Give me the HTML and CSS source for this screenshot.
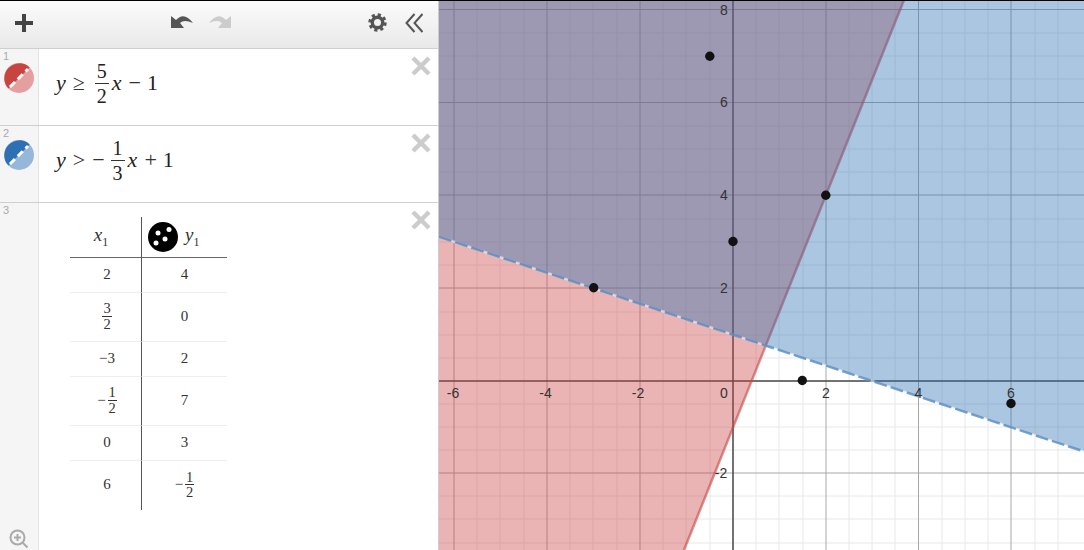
FILE: index.html
```html
<!DOCTYPE html>
<html lang="en">
<head>
<meta charset="utf-8">
<title>Graph</title>
<link rel="stylesheet" href="styles.css">
</head>
<body>
<div class="app">
  <div class="panel">
    <div class="toolbar">
      <svg class="icon plus" width="18" height="18" viewBox="0 0 18 18"><path d="M7 0h4v7h7v4h-7v7H7v-7H0V7h7z"/></svg>
      <svg class="icon undo" width="22" height="14" viewBox="0 0 22 14"><path d="M0 2 L5 6 Q13 -3 22 9 Q13 5 9 9 L13 14 L0 14 Z"/></svg>
      <svg class="icon redo" width="22" height="14" viewBox="0 0 22 14"><path d="M22 2 L17 6 Q9 -3 0 9 Q9 5 13 9 L9 14 L22 14 Z"/></svg>
      <svg class="icon gear" width="19" height="19" viewBox="0 0 20 20"><circle cx="10" cy="10" r="5.500" fill="none" stroke="#555" stroke-width="3.600"/><circle cx="10" cy="10" r="8" fill="none" stroke="#555" stroke-width="3.400" stroke-dasharray="3.280 3"/></svg>
      <svg class="icon chev" width="18" height="20" viewBox="0 0 18 20"><path d="M9.500 1 L1.500 10 L9.500 19 M17.500 1 L9.500 10 L17.500 19" fill="none" stroke="#555" stroke-width="2"/></svg>
    </div>

    <div class="row expr">
      <div class="gutter">
        <span class="num">1</span>
        <svg class="swatch" width="30" height="30" viewBox="0 0 30 30">
          <circle cx="15" cy="15" r="15" fill="#e3a09e"/>
          <path d="M4.400 25.600 A15 15 0 0 1 25.600 4.400 Z" fill="#c74440"/>
          <path d="M6 24 L24 6" stroke="#fff" stroke-width="3" stroke-dasharray="7 4"/>
        </svg>
      </div>
      <div class="math">
        <i>y</i><span class="op">≥</span>
        <span class="frac"><span class="top">5</span><span class="bot">2</span></span>
        <i>x</i><span class="op">−</span><span>1</span>
      </div>
      <svg class="close" width="20" height="20" viewBox="0 0 20 20"><path d="M2 2 L18 18 M18 2 L2 18" stroke="#ccc" stroke-width="4.500"/></svg>
    </div>

    <div class="row expr">
      <div class="gutter">
        <span class="num">2</span>
        <svg class="swatch" width="30" height="30" viewBox="0 0 30 30">
          <circle cx="15" cy="15" r="15" fill="#96b7d9"/>
          <path d="M4.400 25.600 A15 15 0 0 1 25.600 4.400 Z" fill="#2d70b3"/>
          <path d="M6 24 L24 6" stroke="#fff" stroke-width="3" stroke-dasharray="7 4"/>
        </svg>
      </div>
      <div class="math">
        <i>y</i><span class="op">&gt;</span><span class="neg">−</span>
        <span class="frac"><span class="top">1</span><span class="bot">3</span></span>
        <i>x</i><span class="op">+</span><span>1</span>
      </div>
      <svg class="close" width="20" height="20" viewBox="0 0 20 20"><path d="M2 2 L18 18 M18 2 L2 18" stroke="#ccc" stroke-width="4.500"/></svg>
    </div>

    <div class="row last">
      <div class="gutter">
        <span class="num">3</span>
        <svg class="zoomer" width="20" height="20" viewBox="0 0 20 20"><circle cx="8.500" cy="8.500" r="7" fill="none" stroke="#aaa" stroke-width="2"/><path d="M5 8.500h7M8.500 5v7M13.500 13.500 L18.500 18.500" stroke="#aaa" stroke-width="2"/></svg>
      </div>
      <div class="table">
        <div class="cell left head"><span class="hx"><i>x</i><sub>1</sub></span></div>
        <div class="cell head right-head">
          <svg width="30" height="30" viewBox="0 0 30 30"><circle cx="15" cy="15" r="15" fill="#000"/><circle cx="10" cy="11" r="2.500" fill="#fff"/><circle cx="21" cy="7.500" r="2.500" fill="#fff"/><circle cx="17" cy="17" r="2.500" fill="#fff"/><circle cx="8" cy="21" r="2.500" fill="#fff"/></svg>
          <span class="hy"><i>y</i><sub>1</sub></span>
        </div>

        <div class="cell left h35">2</div><div class="cell h35">4</div>
        <div class="cell left h49"><span class="frac small"><span class="top">3</span><span>2</span></span></div><div class="cell h49">0</div>
        <div class="cell left h35">−3</div><div class="cell h35">2</div>
        <div class="cell left h49"><span class="minus">−</span><span class="frac small"><span class="top">1</span><span>2</span></span></div><div class="cell h49">7</div>
        <div class="cell left h35">0</div><div class="cell h35">3</div>
        <div class="cell left h49 end">6</div><div class="cell h49 end"><span class="minus">−</span><span class="frac small"><span class="top">1</span><span>2</span></span></div>
      </div>
      <svg class="close" width="20" height="20" viewBox="0 0 20 20"><path d="M2 2 L18 18 M18 2 L2 18" stroke="#ccc" stroke-width="4.500"/></svg>
    </div>
  </div>

  <svg class="graph" width="645" height="549" viewBox="439 1 645 549">
    <rect x="439" y="0" width="645" height="550" fill="#fff"/>
    <g stroke="#e8e8e8" stroke-width="1">
      <path d="M477 0V550M500 0V550M524 0V550M570 0V550M593 0V550M617 0V550M663 0V550M686 0V550M710 0V550M756 0V550M779 0V550M803 0V550M849 0V550M872 0V550M895 0V550M942 0V550M965 0V550M988 0V550M1035 0V550M1058 0V550"/>
      <path d="M439 33H1084M439 56H1084M439 79H1084M439 126H1084M439 149H1084M439 172H1084M439 219H1084M439 242H1084M439 265H1084M439 312H1084M439 335H1084M439 358H1084M439 404H1084M439 427H1084M439 450H1084M439 496H1084M439 519H1084M439 543H1084"/>
    </g>
    <g stroke="#a8a8a8" stroke-width="1">
      <path d="M454 0V550M547 0V550M640 0V550M826 0V550M918.500 0V550M1011 0V550"/>
      <path d="M439 9.500H1084M439 102.500H1084M439 195H1084M439 288H1084M439 473H1084"/>
    </g>
    <path d="M439 381H1084M733 0V550" stroke="#444" stroke-width="1.500"/>

    <polygon points="439,0 904,0 684,550 439,550" fill="#c74440" fill-opacity=".4"/>
    <line x1="904" y1="0" x2="684" y2="550" stroke="#c74440" stroke-width="2.500" stroke-opacity=".6"/>
    <polygon points="439,0 1084,0 1084,451.500 439,236.800" fill="#2d70b3" fill-opacity=".4"/>
    <line x1="439" y1="236.800" x2="1084" y2="451.500" stroke="#fff" stroke-width="2.500" stroke-opacity=".5"/>
    <line x1="439" y1="236.800" x2="1084" y2="451.500" stroke="#2d70b3" stroke-width="2.500" stroke-opacity=".65" stroke-dasharray="13 4"/>

    <g class="labels">
      <text x="453" y="398">-6</text>
      <text x="545.500" y="398">-4</text>
      <text x="638" y="398">-2</text>
      <text x="724" y="398">0</text>
      <text x="826" y="398">2</text>
      <text x="918.500" y="398">4</text>
      <text x="1011" y="398">6</text>
      <text x="724" y="14.500">8</text>
      <text x="724" y="107">6</text>
      <text x="724" y="200">4</text>
      <text x="724" y="292.500">2</text>
      <text x="721" y="478">-2</text>
    </g>

    <g fill="#111">
      <circle cx="825.800" cy="195.200" r="4.700"/>
      <circle cx="802.300" cy="380.500" r="4.700"/>
      <circle cx="593.700" cy="287.800" r="4.700"/>
      <circle cx="709.800" cy="56.300" r="4.700"/>
      <circle cx="733" cy="241.500" r="4.700"/>
      <circle cx="1011" cy="403.500" r="4.700"/>
    </g>
  </svg>
</div>
</body>
</html>
```
FILE: styles.css
```css
* { box-sizing: border-box; }
html, body { margin: 0; padding: 0; }
body { width: 1084px; height: 550px; overflow: hidden; background: #fff; }

.app {
  display: flex;
  width: 1084px;
  height: 550px;
  border-top: 1px solid #000;
}

.panel {
  display: flex;
  flex-direction: column;
  width: 439px;
  flex: none;
  border-right: 1px solid #ccc;
  background: #fff;
}

.toolbar {
  display: flex;
  align-items: center;
  height: 48px;
  flex: none;
  padding: 0 15px 4px;
  background: linear-gradient(#fbfbfb, #e9e9e9);
  border-bottom: 1px solid #cfcfcf;
}
.icon { flex: none; display: block; }
.plus { fill: #444; }
.undo { fill: #555; margin-left: 138px; margin-top: -4px; }
.redo { fill: #ccc; margin-left: 16px; margin-top: -4px; }
.gear { margin-left: auto; }
.chev { margin-left: 18px; }

.row {
  display: flex;
  align-items: flex-start;
  border-bottom: 1px solid #cfcfcf;
}
.expr { height: 77px; flex: none; }
.last { flex: 1; border-bottom: 0; min-height: 0; }

.gutter {
  display: flex;
  flex-direction: column;
  align-self: stretch;
  width: 39px;
  flex: none;
  padding: 2px 0 0 3px;
  background: #f5f5f5;
  border-right: 1px solid #e4e4e4;
}
.num {
  font: 11px/11px "Liberation Sans", sans-serif;
  color: #aaa;
}
.swatch { display: block; margin: 1px 0 0 1px; }
.zoomer { margin-top: auto; margin-bottom: 1px; margin-left: 6px; }

.close { flex: none; margin: 7px 7px 0 auto; }

.math {
  display: flex;
  align-items: center;
  height: 64px;
  margin-left: 17px;
  margin-top: 2px;
  font: 22px/1 "Liberation Serif", serif;
  color: #222;
}
.math i { margin-right: 1px; }
.op { margin: 0 6px; color: #333; }
.neg { margin: 0 2px 0 1px; color: #333; }

.frac {
  display: inline-flex;
  flex-direction: column;
  align-items: center;
  margin: 0 3px 0 4px;
  font-size: 20px;
  line-height: 1;
}
.frac .top {
  align-self: stretch;
  text-align: center;
  padding: 0 2px 2px;
  border-bottom: 1px solid #333;
}
.frac .bot { padding-top: 2px; }
.frac.small {
  margin: 0;
  font-size: 14.500px;
}
.frac.small .top { padding: 0 1px; }

.table {
  display: grid;
  grid-template-columns: 72px 85px;
  margin: 14px 0 0 31px;
  font: 15px/1 "Liberation Serif", serif;
  color: #333;
}
.cell {
  display: flex;
  align-items: center;
  justify-content: center;
  padding-bottom: 2px;
  border-bottom: 1px solid #eee;
}
.left { border-right: 1px solid #555; padding-left: 3px; }
.head { height: 41px; border-bottom-color: #666; font-size: 19px; padding-bottom: 0; padding-left: 0; }
.hx { margin: -5px 9px 0 0; }
.hy { margin-top: -5px; }
.right-head { justify-content: flex-start; padding-left: 6px; gap: 7px; }
sub { font-size: 12px; line-height: 0; }
.h35 { height: 35px; }
.h49 { height: 49px; }
.end { border-bottom: 0; }
.minus { margin-right: 2px; }

.graph { display: block; flex: none; }
.labels text {
  font: 14px "Liberation Sans", sans-serif;
  fill: #333;
  text-anchor: middle;
}
```
